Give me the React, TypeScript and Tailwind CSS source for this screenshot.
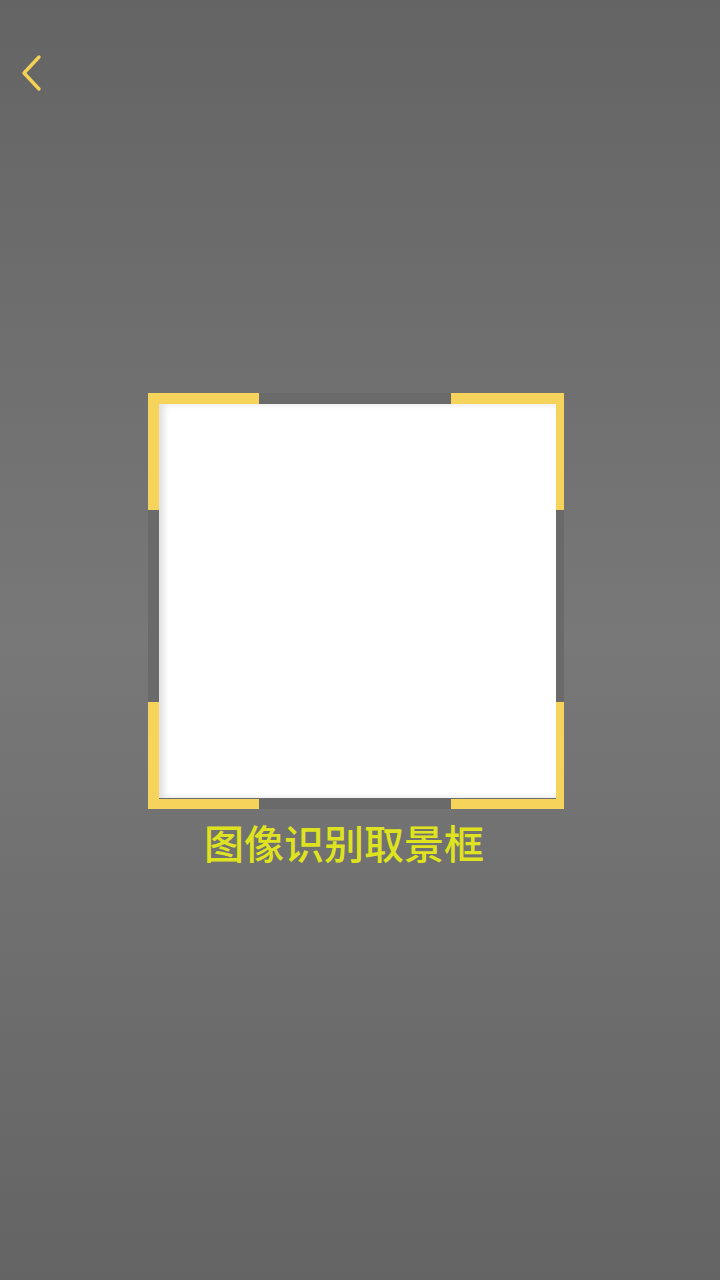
export default function App() {
  return (
    <main className="w-[720px] h-[1280px] flex flex-col bg-[linear-gradient(to_bottom,#646464_0%,#787878_50%,#646464_100%)] font-['Noto_Sans_CJK_SC',sans-serif]">
      <div className="pt-[54px] pl-[19px]">
        <svg width="24" height="40" viewBox="0 0 24 40" fill="none">
          <path d="M20 3 L5 19 L20 35" stroke="#f3d155" strokeWidth="3.4" strokeLinecap="round" strokeLinejoin="round" />
        </svg>
      </div>
      <div className="relative ml-[148px] mt-[299px] w-[416px] h-[416px] bg-[#6a6a6a] pt-[11px] pl-[11px] pr-[8px] pb-[11px]">
        <div className="w-full h-full bg-white shadow-[inset_5px_0_6px_rgba(0,0,0,0.12)]"></div>
        <div className="absolute left-0 top-0 w-[111px] h-[117px] border-t-[11px] border-l-[11px] border-[#f6d35b]"></div>
        <div className="absolute right-0 top-0 w-[113px] h-[117px] border-t-[11px] border-r-[8px] border-[#f6d35b]"></div>
        <div className="absolute left-0 bottom-0 w-[111px] h-[107px] border-b-[10px] border-l-[11px] border-[#f6d35b]"></div>
        <div className="absolute right-0 bottom-0 w-[113px] h-[107px] border-b-[10px] border-r-[8px] border-[#f6d35b]"></div>
      </div>
      <p className="ml-[204px] mt-[9px] text-[40px] leading-[48px] font-medium text-[#dfe21f]">图像识别取景框</p>
    </main>
  )
}
